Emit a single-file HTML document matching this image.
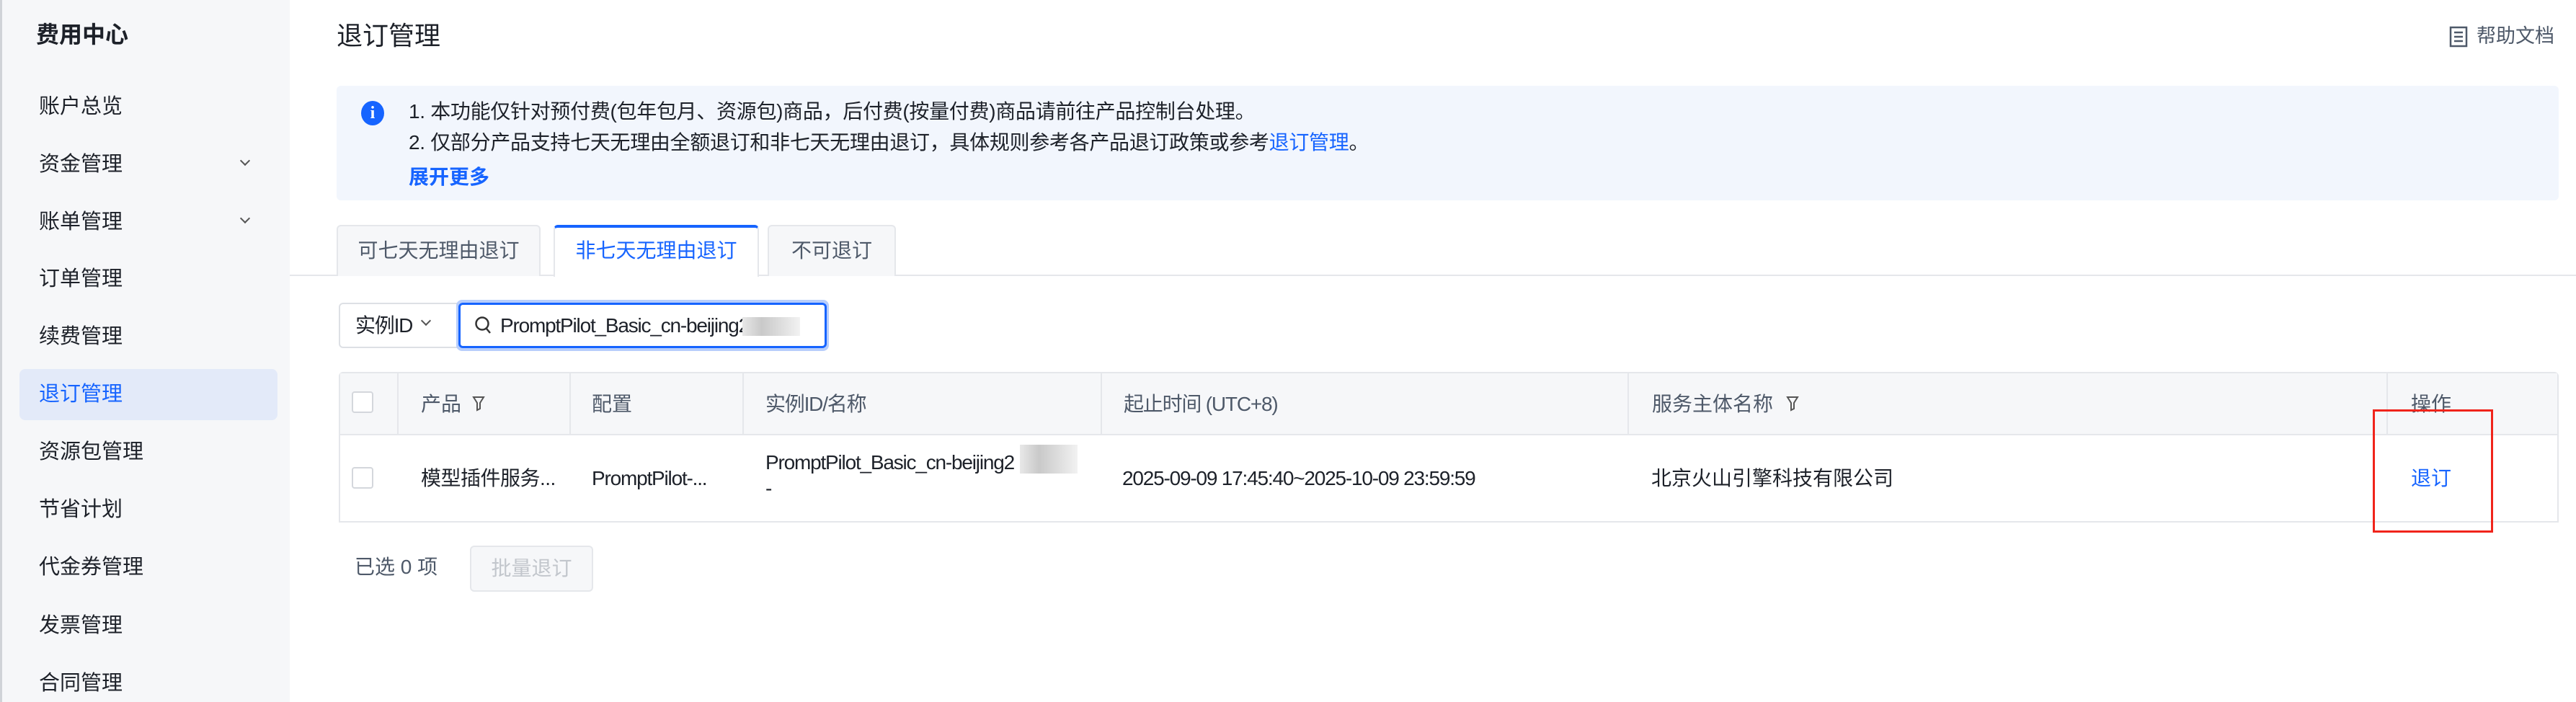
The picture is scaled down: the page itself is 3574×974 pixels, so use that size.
<!DOCTYPE html>
<html><head><meta charset="utf-8"><style>
*{margin:0;padding:0;box-sizing:border-box}
body{width:3574px;height:974px;position:relative;background:#fff;font-family:"Liberation Sans","Noto Sans CJK SC",sans-serif;color:#1d2129;overflow:hidden}
.a{position:absolute;white-space:nowrap}
.side{position:absolute;left:0;top:0;width:402px;height:974px;background:#f6f7f9;border-left:3px solid #d0d3d8}
.mi{position:absolute;left:51px;font-size:29px;color:#1d2129;line-height:40px}
.chev{position:absolute;left:332px;width:10px;height:10px;border-right:2.5px solid #555;border-bottom:2.5px solid #555;transform:rotate(45deg)}
.t28{font-size:28px;line-height:36px}
.ls{letter-spacing:-1.2px}
.vl{position:absolute;top:517px;width:2px;height:87px;background:#e5e7eb}
.cb{position:absolute;width:30px;height:30px;border:2px solid #d4d7dc;border-radius:4px;background:#fff}
.blur{position:absolute;background:linear-gradient(90deg,#e8e8e8,#c9c9c9,#ddd,#f2f2f2)}
</style></head><body>
<div class="side">
<div class="a" style="left:47px;top:28px;font-size:32px;font-weight:bold;line-height:40px">费用中心</div>
<div class="mi" style="top:128px">账户总览</div>
<div class="mi" style="top:208px">资金管理</div><div class="chev" style="top:218px"></div>
<div class="mi" style="top:288px">账单管理</div><div class="chev" style="top:298px"></div>
<div class="mi" style="top:367px">订单管理</div>
<div class="mi" style="top:447px">续费管理</div>
<div style="position:absolute;left:24px;top:512px;width:358px;height:71px;background:#e3eaf9;border-radius:8px"></div>
<div class="mi" style="top:527px;color:#1664ff">退订管理</div>
<div class="mi" style="top:607px">资源包管理</div>
<div class="mi" style="top:687px">节省计划</div>
<div class="mi" style="top:767px">代金券管理</div>
<div class="mi" style="top:848px">发票管理</div>
<div class="mi" style="top:928px">合同管理</div>
</div>

<div class="a" style="left:467px;top:28px;font-size:36px;line-height:44px">退订管理</div>
<svg class="a" style="left:3398px;top:36px" width="26" height="30" viewBox="0 0 26 30"><rect x="2" y="2" width="22" height="26" fill="none" stroke="#4e5969" stroke-width="2.5"/><path d="M7 9h12M7 15h12M7 21h12" stroke="#4e5969" stroke-width="2.5"/></svg>
<div class="a" style="left:3436px;top:32px;font-size:27px;line-height:36px;color:#4e5969">帮助文档</div>

<div style="position:absolute;left:467px;top:119px;width:3083px;height:159px;background:#f2f6fd;border-radius:6px"></div>
<div style="position:absolute;left:501px;top:140px;width:32px;height:34px;border-radius:50%;background:#1664ff;color:#fff;font-size:24px;font-weight:bold;text-align:center;line-height:34px;font-family:'Liberation Serif',serif">i</div>
<div class="a t28" style="left:567px;top:137px;letter-spacing:-0.3px">1. 本功能仅针对预付费(包年包月、资源包)商品，后付费(按量付费)商品请前往产品控制台处理。</div>
<div class="a t28" style="left:567px;top:180px;letter-spacing:-0.3px">2. 仅部分产品支持七天无理由全额退订和非七天无理由退订，具体规则参考各产品退订政策或参考<span style="color:#1664ff">退订管理</span>。</div>
<div class="a t28" style="left:567px;top:228px;color:#1664ff;font-weight:bold">展开更多</div>

<div style="position:absolute;left:402px;top:381px;width:3172px;height:2px;background:#e5e7eb"></div>
<div class="a t28" style="left:467px;top:312px;width:283px;height:71px;background:#f6f7f9;border:2px solid #e5e7eb;border-bottom:none;border-radius:6px 6px 0 0;text-align:center;line-height:67px;color:#4e5969">可七天无理由退订</div>
<div class="a t28" style="left:768px;top:312px;width:285px;height:72px;background:#fff;border:2px solid #e5e7eb;border-top:4px solid #1664ff;border-bottom:none;border-radius:6px 6px 0 0;text-align:center;line-height:64px;color:#1664ff">非七天无理由退订</div>
<div class="a t28" style="left:1065px;top:312px;width:178px;height:71px;background:#f6f7f9;border:2px solid #e5e7eb;border-bottom:none;border-radius:6px 6px 0 0;text-align:center;line-height:67px;color:#4e5969">不可退订</div>

<div style="position:absolute;left:470px;top:420px;width:170px;height:63px;border:2px solid #dde0e5;border-radius:6px 0 0 6px"></div>
<div class="a t28 ls" style="left:493px;top:434px">实例ID</div>
<div style="position:absolute;left:586px;top:440px;width:10px;height:10px;border-right:2.5px solid #555;border-bottom:2.5px solid #555;transform:rotate(45deg)"></div>
<div style="position:absolute;left:633px;top:416px;width:517px;height:71px;border:4px solid #b7cdfb;border-radius:8px"></div>
<div style="position:absolute;left:636px;top:420px;width:511px;height:63px;border:3px solid #1664ff;border-radius:6px;background:#fff"></div>
<svg class="a" style="left:658px;top:438px" width="26" height="28" viewBox="0 0 26 28"><circle cx="11" cy="11" r="8.5" fill="none" stroke="#333" stroke-width="2.5"/><path d="M17 18l5 6" stroke="#333" stroke-width="2.5"/></svg>
<div class="a t28 ls" style="left:694px;top:434px">PromptPilot_Basic_cn-beijing2</div>
<div class="blur" style="left:1030px;top:440px;width:80px;height:26px"></div>

<div style="position:absolute;left:470px;top:516px;width:3080px;height:209px;border:2px solid #e5e7eb;border-radius:6px 6px 0 0"></div>
<div style="position:absolute;left:472px;top:518px;width:3076px;height:86px;background:#f6f7f9;border-bottom:2px solid #e5e7eb"></div>
<div class="vl" style="left:551px"></div><div class="vl" style="left:790px"></div><div class="vl" style="left:1030px"></div><div class="vl" style="left:1527px"></div><div class="vl" style="left:2258px"></div><div class="vl" style="left:3311px"></div>
<div class="cb" style="left:488px;top:543px"></div>
<div class="a t28" style="left:584px;top:543px;color:#4e5969">产品</div>
<svg class="a" style="left:655px;top:548px" width="18" height="24" viewBox="0 0 18 24"><path d="M2 3h14l-5 8v8l-4 2v-10z" fill="none" stroke="#555" stroke-width="2"/></svg>
<div class="a t28" style="left:821px;top:543px;color:#4e5969">配置</div>
<div class="a t28 ls" style="left:1062px;top:543px;color:#4e5969">实例ID/名称</div>
<div class="a t28 ls" style="left:1559px;top:543px;color:#4e5969">起止时间 (UTC+8)</div>
<div class="a t28" style="left:2292px;top:543px;color:#4e5969">服务主体名称</div>
<svg class="a" style="left:2478px;top:548px" width="18" height="24" viewBox="0 0 18 24"><path d="M2 3h14l-5 8v8l-4 2v-10z" fill="none" stroke="#555" stroke-width="2"/></svg>
<div class="a t28" style="left:3345px;top:543px;color:#4e5969">操作</div>

<div class="cb" style="left:488px;top:648px"></div>
<div class="a t28" style="left:584px;top:646px;letter-spacing:-0.5px">模型插件服务...</div>
<div class="a t28 ls" style="left:821px;top:646px">PromptPilot-...</div>
<div class="a t28 ls" style="left:1062px;top:624px">PromptPilot_Basic_cn-beijing2</div>
<div class="blur" style="left:1415px;top:617px;width:80px;height:40px"></div>
<div class="a t28" style="left:1062px;top:660px">-</div>
<div class="a t28 ls" style="left:1557px;top:646px">2025-09-09 17:45:40~2025-10-09 23:59:59</div>
<div class="a t28" style="left:2291px;top:646px">北京火山引擎科技有限公司</div>
<div class="a t28" style="left:3345px;top:646px;color:#1664ff">退订</div>
<div style="position:absolute;left:3292px;top:568px;width:167px;height:171px;border:3px solid #f0241b"></div>

<div class="a t28" style="left:492px;top:769px;color:#4e5969">已选 0 项</div>
<div class="a t28" style="left:652px;top:757px;width:171px;height:64px;background:#f6f7f9;border:2px solid #e5e7eb;border-radius:6px;text-align:center;line-height:60px;color:#c2c6cc">批量退订</div>
</body></html>
